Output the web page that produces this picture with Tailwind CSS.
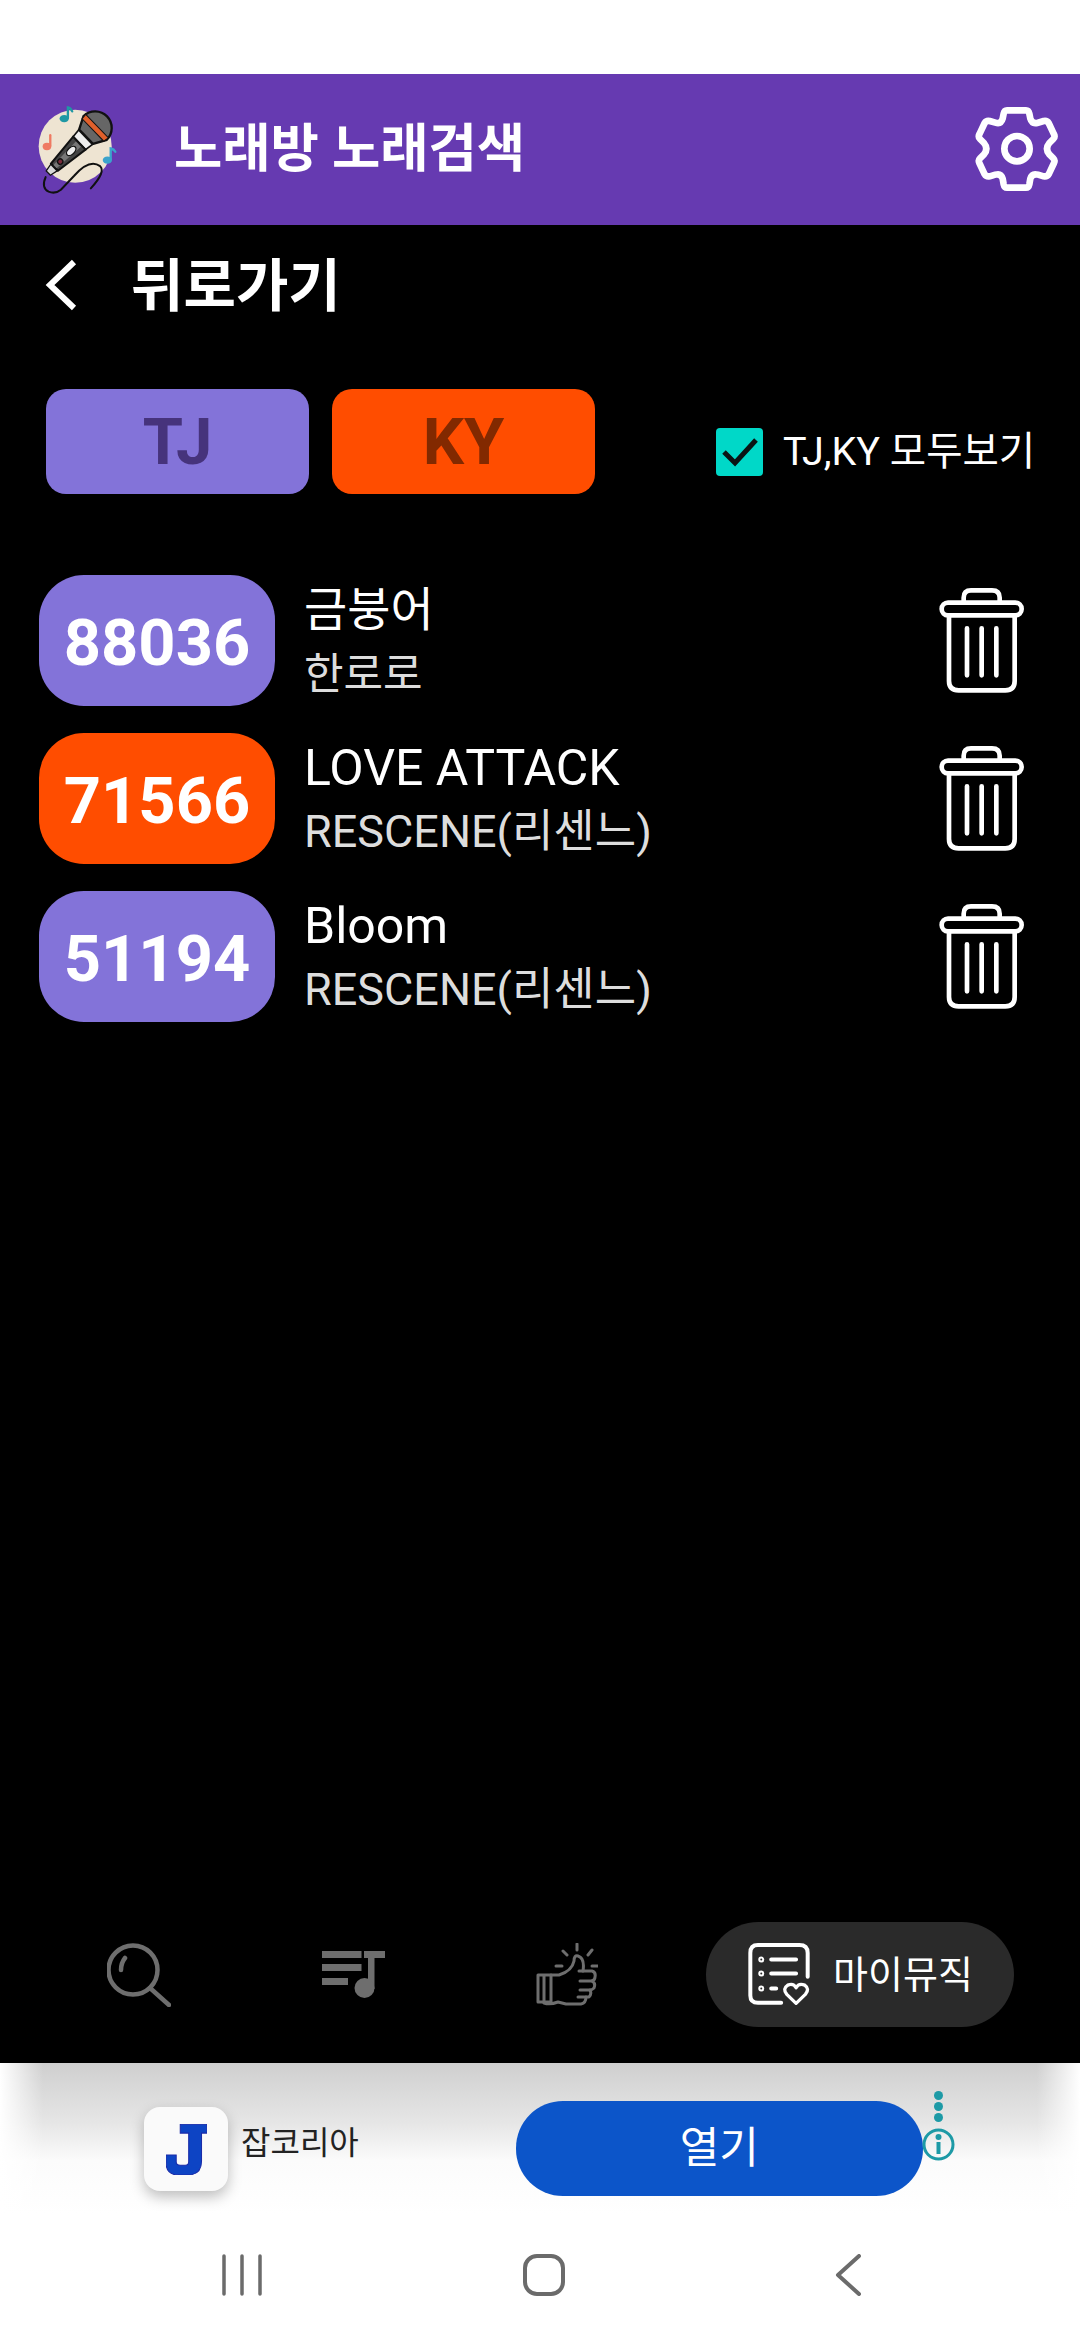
<!DOCTYPE html>
<html lang="ko">
<head>
    <meta charset="UTF-8">
    <meta name="viewport" content="width=device-width, initial-scale=1.0">
    <title>노래방 노래검색</title>
    <script src="https://cdn.jsdelivr.net/npm/@tailwindcss/browser@4"></script>
</head>
<body class="bg-white">
    <div class="w-[1080px] h-[2340px] flex flex-col bg-white font-['Roboto','Noto_Sans_CJK_KR',sans-serif] overflow-hidden">
        <div class="h-[74px] bg-white"></div>

        <header class="h-[151px] bg-[#663ab1] flex items-center pl-[37px] pr-[21px]">
            <svg class="w-[83px] h-[93px]" viewBox="50 35 250 280">
                <circle cx="165" cy="165" r="110" fill="#eee4d2"/>
                <g stroke-linecap="round">
                    <ellipse cx="132" cy="82" rx="14" ry="11" fill="#1f98a4"/>
                    <path d="M143 80V48Q152 50 156 60" stroke="#1f98a4" stroke-width="7" fill="none"/>
                    <ellipse cx="80" cy="166" rx="13" ry="11" fill="#ef7a62"/>
                    <path d="M90 164V132" stroke="#ef7a62" stroke-width="7" fill="none"/>
                    <ellipse cx="262" cy="207" rx="14" ry="11" fill="#3ba3cc"/>
                    <path d="M272 205V172Q282 174 286 182" stroke="#3ba3cc" stroke-width="7" fill="none"/>
                </g>
                <g transform="translate(225 110) rotate(46)">
                    <path d="M-30 38L-50 0A50 50 0 0 1 50 0L30 38Z" fill="#666" stroke="#111" stroke-width="7"/>
                    <path d="M-49 -8H49L47 9H-47Z" fill="#e0602c" stroke="#111" stroke-width="3"/>
                    <path d="M-30 40H30L27 66H-27Z" fill="#eee" stroke="#111" stroke-width="5"/>
                    <path d="M-27 66H27L15 170H-15Z" fill="#444" stroke="#111" stroke-width="6"/>
                    <path d="M-11 70H11L7 168H-7Z" fill="#777"/>
                    <ellipse cx="0" cy="100" rx="10" ry="17" fill="#eee" stroke="#111" stroke-width="4"/>
                    <circle cx="0" cy="146" r="8" fill="#7a2a3a" stroke="#111" stroke-width="4"/>
                    <path d="M-14 172H14L9 196H-9Z" fill="#d8d8d8" stroke="#111" stroke-width="4"/>
                </g>
                <path d="M76 258Q62 290 85 302Q105 310 122 296L162 254Q208 202 240 225Q258 242 212 292" fill="none" stroke="#111" stroke-width="6" stroke-linecap="round"/>
            </svg>
            <h1 class="ml-[54px] text-[52.500px] font-bold text-white leading-none">노래방 노래검색</h1>
            <svg class="ml-auto w-[84px] h-[85px]" viewBox="280 140 250 255" fill="none" stroke="#fff" stroke-width="20" stroke-linejoin="round">
                <path d="M375 150H432Q440 150 442 160L445 175Q450 192 468 187L485 182Q495 180 500 188L516 222Q520 230 514 236L502 248Q488 265 502 282L514 294Q520 300 516 308L500 342Q495 350 485 348L468 343Q450 338 445 355L442 372Q440 382 432 382H375Q367 382 365 372L362 355Q357 338 340 343L323 348Q313 350 308 342L292 308Q288 300 294 294L306 282Q320 265 306 248L294 236Q288 230 292 222L308 188Q313 180 323 182L340 187Q357 192 362 175L365 160Q367 150 375 150Z"/>
                <circle cx="405" cy="265" r="38"/>
            </svg>
        </header>

        <main class="flex-1 bg-black flex flex-col">
            <div class="h-[120px] flex items-center pl-[45px]">
                <svg class="w-[32px] h-[52px]" viewBox="0 0 32 52" fill="none" stroke="#fff" stroke-width="6">
                    <path d="M29 3L5 26L29 49"/>
                </svg>
                <span class="ml-[54px] mt-[3px] text-[57px] font-bold text-white leading-none">뒤로가기</span>
            </div>

            <div class="mt-[44px] h-[105px] flex items-center pl-[46px]">
                <button class="w-[263px] h-[105px] pt-[2px] rounded-[20px] bg-[#8373d9] text-[65px] font-bold text-[#46337c] leading-none">TJ</button>
                <button class="ml-[23px] w-[263px] h-[105px] pt-[2px] rounded-[20px] bg-[#ff4d00] text-[65px] font-bold text-[#822900] leading-none">KY</button>
                <span class="ml-[121px] mt-[21px] w-[47px] h-[48px] rounded-[4px] bg-[#00d8c8] flex items-center justify-center">
                    <svg class="w-[38px] h-[30px]" viewBox="0 0 38 30" fill="none" stroke="#0a1414" stroke-width="5">
                        <path d="M3 15L14 26L35 3"/>
                    </svg>
                </span>
                <span class="ml-[20px] mt-[21px] text-[39.500px] text-white leading-none">TJ,KY 모두보기</span>
            </div>

            <ul class="mt-[81px] flex flex-col gap-[27px] pl-[39px] pr-[53px]">
                <li class="flex items-center">
                    <div class="w-[236px] h-[131px] pt-[6px] rounded-[45px] bg-[#8373d9] flex items-center justify-center text-[65px] font-bold text-white leading-none">88036</div>
                    <div class="ml-[29px] pt-[2px] flex flex-col">
                        <span class="text-[47px] leading-[64px] text-white">금붕어</span>
                        <span class="text-[43px] leading-[64px] text-[#dddddd]">한로로</span>
                    </div>
                    <svg class="ml-auto w-[90px] h-[110px]" viewBox="110 45 270 330" fill="none" stroke="#fff" stroke-width="14" stroke-linecap="round">
                        <path d="M190 90V80Q190 58 212 58H275Q298 58 298 80V90"/>
                        <rect x="124" y="95" width="240" height="38" rx="19"/>
                        <path d="M146 135V330Q146 358 175 358H315Q343 358 343 330V135"/>
                        <path d="M200 172V313M244 172V313M288 172V313"/>
                    </svg>
                </li>
                <li class="flex items-center">
                    <div class="w-[236px] h-[131px] pt-[6px] rounded-[45px] bg-[#ff4d00] flex items-center justify-center text-[65px] font-bold text-white leading-none">71566</div>
                    <div class="ml-[29px] pt-[2px] flex flex-col">
                        <span class="text-[50px] leading-[64px] text-white">LOVE ATTACK</span>
                        <span class="text-[45px] leading-[64px] text-[#dddddd]">RESCENE(리센느)</span>
                    </div>
                    <svg class="ml-auto w-[90px] h-[110px]" viewBox="110 45 270 330" fill="none" stroke="#fff" stroke-width="14" stroke-linecap="round">
                        <path d="M190 90V80Q190 58 212 58H275Q298 58 298 80V90"/>
                        <rect x="124" y="95" width="240" height="38" rx="19"/>
                        <path d="M146 135V330Q146 358 175 358H315Q343 358 343 330V135"/>
                        <path d="M200 172V313M244 172V313M288 172V313"/>
                    </svg>
                </li>
                <li class="flex items-center">
                    <div class="w-[236px] h-[131px] pt-[6px] rounded-[45px] bg-[#8373d9] flex items-center justify-center text-[65px] font-bold text-white leading-none">51194</div>
                    <div class="ml-[29px] pt-[2px] flex flex-col">
                        <span class="text-[50px] leading-[64px] text-white">Bloom</span>
                        <span class="text-[45px] leading-[64px] text-[#dddddd]">RESCENE(리센느)</span>
                    </div>
                    <svg class="ml-auto w-[90px] h-[110px]" viewBox="110 45 270 330" fill="none" stroke="#fff" stroke-width="14" stroke-linecap="round">
                        <path d="M190 90V80Q190 58 212 58H275Q298 58 298 80V90"/>
                        <rect x="124" y="95" width="240" height="38" rx="19"/>
                        <path d="M146 135V330Q146 358 175 358H315Q343 358 343 330V135"/>
                        <path d="M200 172V313M244 172V313M288 172V313"/>
                    </svg>
                </li>
            </ul>

            <!-- tab bar -->
            <nav class="mt-auto mb-[36px] h-[105px] flex items-center pl-[32px]">
                <div class="w-[214px] flex justify-center">
                    <svg class="w-[64px] h-[64px]" viewBox="0 0 64 64" fill="none" stroke="#6e6e6e" stroke-width="4.5" stroke-linecap="round">
                        <circle cx="26" cy="27" r="24.5"/>
                        <path d="M43 45L62 62M14 27Q14 20 18 15" />
                    </svg>
                </div>
                <div class="w-[214px] flex justify-center">
                    <svg class="w-[63px] h-[47px]" viewBox="0 0 63 47" fill="#6e6e6e">
                        <rect x="0" y="0" width="39.500" height="7"/>
                        <rect x="0" y="13" width="39.500" height="7"/>
                        <rect x="0" y="27" width="26" height="7"/>
                        <rect x="42" y="0" width="21" height="7"/>
                        <rect x="46" y="0" width="6.500" height="38"/>
                        <circle cx="42.500" cy="37" r="10"/>
                    </svg>
                </div>
                <div class="w-[214px] flex justify-center">
                    <svg class="w-[62px] h-[63px]" viewBox="0 0 62 63" fill="none" stroke="#6e6e6e" stroke-width="3" stroke-linecap="round" stroke-linejoin="round">
                        <path d="M41 1V7M27 8L31 12M56 7L52 12M20 23H26M56 23H62"/>
                        <path d="M2 32H15V59H2ZM8 32V59"/>
                        <path d="M15 32H23Q36 28 38 18Q38 12 42 13Q49 15 47 28H56Q60 29 59 34Q59 37 56 38Q60 40 58 45Q56 47 54 47Q56 51 53 54H50Q50 60 45 61H30L22 59Q14 62 8 60"/>
                        <path d="M47 28H43M56 38H44M54 47H44M50 54H42"/>
                    </svg>
                </div>
                <div class="ml-[32px] w-[308px] h-[105px] rounded-full bg-[#2a2a2a] flex items-center pl-[42px]">
                    <svg class="w-[63px] h-[63px]" viewBox="205 160 190 190" fill="none" stroke="#fff" stroke-width="12" stroke-linecap="round">
                        <path d="M305 340H235Q212 340 212 318V190Q212 166 235 166H360Q385 166 385 190V262"/>
                        <path d="M275 210H350M275 252H350M275 297H290"/>
                        <circle cx="245" cy="210" r="3"/>
                        <circle cx="245" cy="252" r="3"/>
                        <circle cx="245" cy="297" r="3"/>
                        <path d="M350 342L322 315Q308 298 325 287Q342 280 350 295Q358 280 376 287Q392 298 378 315Z" stroke-width="10" stroke-linejoin="round"/>
                    </svg>
                    <span class="ml-[22px] text-[38px] text-white leading-none">마이뮤직</span>
                </div>
            </nav>
        </main>

        <!-- ad banner -->
        <div class="h-[150px] flex bg-[linear-gradient(to_right,#ffffff_0%,transparent_4%,transparent_96%,#ffffff_100%),linear-gradient(#cfcfcf,#e6e6e6_40%,#fbfbfb_65%,#ffffff)]">
            <div class="mt-[44px] ml-[144px] w-[84px] h-[84px] rounded-[16px] bg-[#fafafa] shadow-[0_6px_14px_rgba(0,0,0,0.25)] flex items-center justify-center">
                <svg class="w-[41px] h-[51px]" viewBox="138 100 121 151" fill="#0d44c4" stroke="#1a2aa8" stroke-width="3">
                    <path d="M180 101H259V127H243V210Q243 251 200 251H175Q138 251 138 215V192H168V212Q168 222 180 222H195Q205 222 205 212V127H180Z"/>
                </svg>
            </div>
            <span class="mt-[60px] ml-[13px] text-[32px] leading-[40px] text-[#222]">잡코리아</span>
            <button class="mt-[38px] ml-[157px] w-[407px] h-[95px] rounded-[47px] bg-[#0c55c9] text-[43px] text-white leading-none">열기</button>
            <div class="ml-[2px] w-[28px] flex flex-col items-center pt-[28px]">
                <span class="w-[9px] h-[9px] rounded-full bg-[#1d9aa6]"></span>
                <span class="mt-[2px] w-[9px] h-[9px] rounded-full bg-[#1d9aa6]"></span>
                <span class="mt-[2px] w-[9px] h-[9px] rounded-full bg-[#1d9aa6]"></span>
                <svg class="mt-[6px] w-[33px] h-[33px]" viewBox="0 0 33 33" fill="none" stroke="#1d9aa6" stroke-width="3">
                    <circle cx="16.500" cy="16.500" r="14.500"/>
                    <path d="M16.500 14V26" stroke-width="4"/>
                    <circle cx="16.500" cy="9" r="1.500"/>
                </svg>
            </div>
        </div>

        <!-- system nav -->
        <div class="flex-none h-[127px] bg-white flex items-start pt-[41px]">
            <svg class="ml-[222px] w-[40px] h-[42px]" viewBox="0 0 40 42" stroke="#6b6b6b" stroke-width="3.500" stroke-linecap="round">
                <path d="M2 2V40M20 2V40M38 2V40"/>
            </svg>
            <svg class="ml-[261px] w-[42px] h-[42px]" viewBox="0 0 42 42" fill="none" stroke="#6b6b6b" stroke-width="4">
                <rect x="2" y="2" width="38" height="38" rx="12"/>
            </svg>
            <svg class="ml-[270px] w-[26px] h-[42px]" viewBox="0 0 26 42" fill="none" stroke="#6b6b6b" stroke-width="4" stroke-linecap="round" stroke-linejoin="round">
                <path d="M24 2L3 21L24 40"/>
            </svg>
        </div>
    </div>
</body>
</html>
